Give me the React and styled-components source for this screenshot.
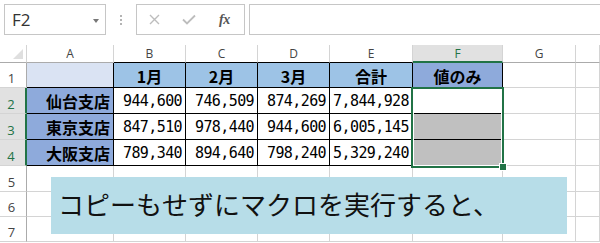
import React from "react";
import styled, { createGlobalStyle } from "styled-components";

const Global = createGlobalStyle`
  html, body { margin: 0; padding: 0; background: #fff; overflow: hidden; }
  body { width: 600px; height: 243px; font-family: "Open Sans", "Noto Sans CJK JP", sans-serif; }
`;

const GREEN = "#217346";
const GRID = "#d4d4d4";

const TopBar = styled.div`
  height: 45px;
  display: flex;
  align-items: flex-start;
  padding: 4px 0 0 4px;
  box-sizing: border-box;
  background: #fff;
`;

const NameBox = styled.div`
  width: 102px;
  height: 31px;
  box-sizing: border-box;
  border: 1px solid #c6c6c6;
  background: #fff;
  display: flex;
  align-items: center;
  justify-content: space-between;
  padding: 0 6px 0 7px;
  font-family: "Open Sans", sans-serif;
  font-size: 17px;
  color: #333;
`;

const Arrow = styled.span`
  width: 0;
  height: 0;
  border-left: 3.5px solid transparent;
  border-right: 3.5px solid transparent;
  border-top: 4px solid #777;
  margin-top: 2px;
`;

const Dots = styled.div`
  width: 30px;
  height: 31px;
  display: flex;
  flex-direction: column;
  align-items: center;
  justify-content: center;
  gap: 2px;
  & > span { width: 2px; height: 2px; background: #b4b4b4; }
`;

const FxBox = styled.div`
  width: 109px;
  height: 31px;
  box-sizing: border-box;
  border: 1px solid #c6c6c6;
  background: #fff;
  display: flex;
  align-items: center;
  padding-left: 12px;
  gap: 22px;
`;

const Fx = styled.span`
  font-family: "Liberation Serif", serif;
  font-style: italic;
  font-weight: bold;
  font-size: 14px;
  color: #555;
  margin-left: 1px;
  letter-spacing: -0.5px;
`;

const FormulaInput = styled.div`
  flex: 1;
  height: 31px;
  box-sizing: border-box;
  border: 1px solid #c6c6c6;
  border-right: none;
  margin-left: 4px;
  background: #fff;
`;

const Sheet = styled.div`
  position: relative;
  display: grid;
  grid-template-columns: 27px 87px 72px 72px 72px 83px 90px 73px 1fr;
  grid-template-rows: 18px 25px 26px 26px 26px 26px 25px 25px;
`;

const Corner = styled.div`
  position: relative;
  box-sizing: border-box;
  border-right: 1px solid ${GRID};
  border-bottom: 1px solid #ababab;
  &::after {
    content: "";
    position: absolute;
    right: 3px;
    bottom: 3px;
    width: 0;
    height: 0;
    border-left: 10px solid transparent;
    border-bottom: 10px solid #dfdfdf;
  }
`;

const ColHead = styled.div`
  box-sizing: border-box;
  display: flex;
  align-items: center;
  justify-content: center;
  font-family: "Open Sans", sans-serif;
  font-size: 12px;
  color: ${(p) => (p.$active ? GREEN : "#444")};
  background: ${(p) => (p.$active ? "#e1e1e1" : "#fff")};
  border-right: 1px solid ${GRID};
  border-bottom: ${(p) =>
    p.$active ? `2px solid ${GREEN}` : `1px solid ${p.$dark ? "#000" : "#ababab"}`};
  padding-top: ${(p) => (p.$active ? "1px" : "0")};
`;

const RowHead = styled.div`
  box-sizing: border-box;
  display: flex;
  align-items: flex-end;
  justify-content: center;
  padding: 0 3px 1px 0;
  font-family: "Open Sans", sans-serif;
  font-size: 13px;
  line-height: 16px;
  color: ${(p) => (p.$active ? GREEN : "#444")};
  background: ${(p) => (p.$active ? "#e1e1e1" : "#fff")};
  border-right: ${(p) => (p.$active ? `2px solid ${GREEN}` : "1px solid #ababab")};
  border-bottom: 1px solid ${GRID};
`;

const Cell = styled.div`
  box-sizing: border-box;
  display: flex;
  align-items: center;
  justify-content: ${(p) => (p.$align === "center" ? "center" : p.$align === "right" ? "flex-end" : "flex-start")};
  padding: 1px 3px 0 3px;
  background: ${(p) => p.$bg || "#fff"};
  border-right: 1px solid ${(p) => (p.$dark ? "#000" : GRID)};
  border-bottom: 1px solid ${(p) => (p.$dark ? "#000" : GRID)};
  font-family: ${(p) =>
    p.$num ? `"DejaVu Sans Mono", monospace` : `"Noto Sans CJK JP", sans-serif`};
  font-size: ${(p) => (p.$num ? "15px" : "16px")};
  letter-spacing: ${(p) => (p.$num ? "-0.6px" : "0")};
  font-weight: ${(p) => (p.$bold ? 700 : 400)};
  color: #000;
  white-space: nowrap;
  overflow: hidden;
`;

const Selection = styled.div`
  position: absolute;
  left: 411px;
  top: 42px;
  width: 93px;
  height: 81px;
  box-sizing: border-box;
  border: 2px solid ${GREEN};
  box-shadow: inset 0 0 0 1px #fff;
  pointer-events: none;
`;

const Handle = styled.span`
  position: absolute;
  right: -5px;
  bottom: -5px;
  width: 6px;
  height: 6px;
  background: ${GREEN};
  border: 1px solid #fff;
`;

const Callout = styled.div`
  position: absolute;
  left: 51px;
  top: 132px;
  width: 516px;
  height: 57px;
  background: #b7dde8;
  display: flex;
  align-items: center;
  padding-left: 7px;
  box-sizing: border-box;
  font-family: "Noto Sans CJK JP", sans-serif;
  font-size: 26px;
  color: #111;
  padding-bottom: 4px;
`;

const COLS = ["A", "B", "C", "D", "E", "F", "G", ""];
const HEAD = ["1月", "2月", "3月", "合計"];
const DATA = [
  ["仙台支店", "944,600", "746,509", "874,269", "7,844,928"],
  ["東京支店", "847,510", "978,440", "944,600", "6,005,145"],
  ["大阪支店", "789,340", "894,640", "798,240", "5,329,240"],
];

export default function App() {
  const cells = [];
  cells.push(<Corner key="corner" />);
  COLS.forEach((c, i) => {
    cells.push(
      <ColHead key={"h" + i} $active={c === "F"} $dark={i >= 1 && i <= 4}>
        {c}
      </ColHead>
    );
  });

  // row 1
  cells.push(<RowHead key="r1">1</RowHead>);
  cells.push(<Cell key="a1" $bg="#dae3f3" $dark />);
  HEAD.forEach((h, i) =>
    cells.push(
      <Cell key={"h1" + i} $bg="#9dc3e6" $dark $bold $align="center">
        {h}
      </Cell>
    )
  );
  cells.push(
    <Cell key="f1" $bg="#8eaadb" $dark $bold $align="center">
      値のみ
    </Cell>
  );
  cells.push(<Cell key="g1" />);
  cells.push(<Cell key="h1" />);

  DATA.forEach((row, r) => {
    cells.push(
      <RowHead key={"r" + (r + 2)} $active>
        {r + 2}
      </RowHead>
    );
    cells.push(
      <Cell key={"a" + r} $bg="#8eaadb" $dark $bold $align="right">
        {row[0]}
      </Cell>
    );
    row.slice(1).forEach((v, i) =>
      cells.push(
        <Cell key={"n" + r + i} $dark $num $align="right">
          {v}
        </Cell>
      )
    );
    cells.push(<Cell key={"f" + r} $dark $bg={r === 0 ? "#fff" : "#c0c0c0"} />);
    cells.push(<Cell key={"g" + r} />);
    cells.push(<Cell key={"hh" + r} />);
  });

  [5, 6, 7].forEach((n) => {
    cells.push(<RowHead key={"r" + n}>{n}</RowHead>);
    COLS.forEach((c, i) => cells.push(<Cell key={"e" + n + "-" + i} />));
  });

  return (
    <>
      <Global />
      <TopBar>
        <NameBox>
          <span>F2</span>
          <Arrow />
        </NameBox>
        <Dots>
          <span />
          <span />
          <span />
        </Dots>
        <FxBox>
          <svg width="11" height="11" viewBox="0 0 11 11">
            <path d="M1 1 L10 10 M10 1 L1 10" stroke="#bdbdbd" strokeWidth="1.4" fill="none" />
          </svg>
          <svg width="14" height="11" viewBox="0 0 14 11">
            <path d="M1 5.5 L5 9.5 L13 1.5" stroke="#bdbdbd" strokeWidth="1.8" fill="none" />
          </svg>
          <Fx>fx</Fx>
        </FxBox>
        <FormulaInput />
      </TopBar>
      <Sheet>
        {cells}
        <Selection>
          <Handle />
        </Selection>
        <Callout>コピーもせずにマクロを実行すると、</Callout>
      </Sheet>
    </>
  );
}
